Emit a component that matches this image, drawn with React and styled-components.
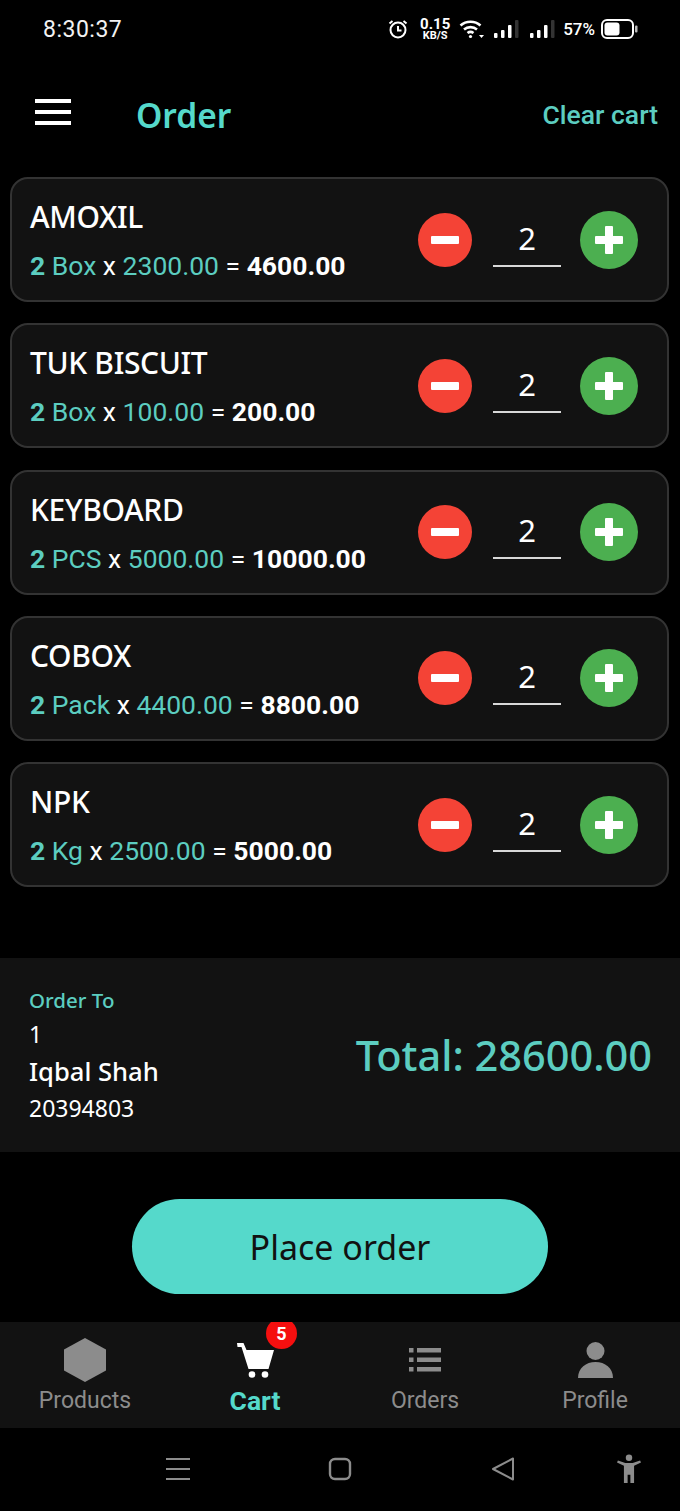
import React from 'react';
import styled, { createGlobalStyle } from 'styled-components';

const TEAL = '#55d9cb';
const SOFT_TEAL = '#5ccdc0';
const GREY = '#8c8c8c';

const GlobalStyle = createGlobalStyle`
  html, body {
    margin: 0;
    padding: 0;
    background: #000;
  }
`;

const Screen = styled.div`
  width: 680px;
  height: 1511px;
  background: #000;
  color: #fff;
  display: flex;
  flex-direction: column;
  overflow: hidden;
  font-family: "Noto Sans", sans-serif;
`;

const StatusBar = styled.div`
  height: 58px;
  flex: none;
  display: flex;
  align-items: center;
  justify-content: space-between;
  padding: 0 42px 0 43px;
  box-sizing: border-box;
`;

const Clock = styled.span`
  font-family: Roboto, sans-serif;
  font-size: 23px;
  letter-spacing: 0.5px;
  color: #f2f2f2;
`;

const StatusIcons = styled.div`
  display: flex;
  align-items: center;
  gap: 8px;
`;

const SignalGroup = styled.div`
  display: flex;
  align-items: center;
  gap: 11px;
`;

const Speed = styled.div`
  display: flex;
  flex-direction: column;
  align-items: center;
  font-family: Roboto, sans-serif;
  font-weight: 700;
  font-size: 15px;
  line-height: 13px;
  width: 30px;
  margin-left: 4px;
  small {
    font-size: 11px;
    line-height: 9px;
  }
`;

const Battery = styled.span`
  font-family: Roboto, sans-serif;
  font-weight: 500;
  font-size: 17px;
  margin-right: -2px;
`;

const Header = styled.div`
  height: 119px;
  flex: none;
  display: flex;
  align-items: flex-start;
  box-sizing: border-box;
  padding: 32px 22px 0 35px;
`;

const MenuButton = styled.div`
  width: 36px;
  height: 26px;
  margin-top: 9px;
  display: flex;
  flex-direction: column;
  justify-content: space-between;
  span {
    height: 4px;
    background: #fff;
  }
`;

const Title = styled.h1`
  margin: 0 0 0 65px;
  font-family: "Noto Sans", sans-serif;
  font-size: 33.500px;
  line-height: 50px;
  font-weight: 600;
  color: ${TEAL};
`;

const ClearCart = styled.span`
  margin-left: auto;
  font-family: Roboto, sans-serif;
  font-size: 26.500px;
  line-height: 50px;
  font-weight: 500;
  color: ${SOFT_TEAL};
`;

const CartList = styled.div`
  display: flex;
  flex-direction: column;
  gap: 21.300px;
  padding: 0 11px 0 10px;
  height: 781px;
  flex: none;
  box-sizing: border-box;
`;

const Card = styled.div`
  height: 125px;
  box-sizing: border-box;
  flex: none;
  background: #121212;
  border: 2px solid #333;
  border-radius: 18px;
  display: flex;
  align-items: center;
  padding: 0 29px 0 18px;
`;

const CardText = styled.div`
  flex: 1;
  min-width: 0;
`;

const ItemName = styled.div`
  font-size: 30px;
  line-height: 40px;
  letter-spacing: -0.350px;
  font-weight: 500;
  margin-top: 1px;
  margin-bottom: 12px;
`;

const ItemLine = styled.div`
  font-family: Roboto, sans-serif;
  font-size: 26.500px;
  line-height: 34px;
  white-space: pre;
  color: #fff;
`;

const Accent = styled.span`
  color: ${SOFT_TEAL};
  font-weight: ${(props) => (props.$bold ? 700 : 400)};
`;

const Strong = styled.span`
  font-weight: 700;
`;

const Stepper = styled.div`
  display: flex;
  align-items: center;
  flex: none;
`;

const RoundButton = styled.div`
  width: ${(props) => props.$size}px;
  height: ${(props) => props.$size}px;
  border-radius: 50%;
  background: ${(props) => props.$color};
  position: relative;
  flex: none;
  &::before,
  &::after {
    content: '';
    position: absolute;
    background: #fff;
    border-radius: 1px;
    left: 50%;
    top: 50%;
    width: 28px;
    height: 8px;
    transform: translate(-50%, -50%);
  }
  &::after {
    display: ${(props) => (props.$plus ? 'block' : 'none')};
    width: 8px;
    height: 28px;
  }
`;

const Qty = styled.div`
  width: 68px;
  height: 54px;
  margin: 0 19px 0 21px;
  box-sizing: border-box;
  border-bottom: 2px solid #d8d8d8;
  text-align: center;
  font-size: 31px;
  line-height: 50px;
`;

const Summary = styled.div`
  height: 194px;
  flex: none;
  background: #121212;
  box-sizing: border-box;
  padding: 27px 28px 0 29px;
  display: flex;
  justify-content: space-between;
  align-items: center;
`;

const Recipient = styled.div`
  display: flex;
  flex-direction: column;
  align-self: flex-start;
`;

const OrderTo = styled.div`
  font-size: 20.500px;
  line-height: 30px;
  font-weight: 500;
  color: ${SOFT_TEAL};
  margin-bottom: 3px;
`;

const RecipientLine = styled.div`
  font-size: ${(props) => (props.$large ? 25.600 : 23)}px;
  line-height: ${(props) => (props.$large ? 41 : 33)}px;
  font-weight: ${(props) => (props.$large ? 500 : 400)};
`;

const Total = styled.div`
  font-size: 41.500px;
  font-weight: 500;
  color: ${SOFT_TEAL};
  margin-bottom: 27px;
`;

const ButtonArea = styled.div`
  height: 170px;
  flex: none;
  box-sizing: border-box;
  padding-top: 47px;
  display: flex;
  justify-content: center;
  align-items: flex-start;
`;

const PlaceOrder = styled.button`
  width: 416px;
  height: 95px;
  border: none;
  border-radius: 48px;
  background: ${TEAL};
  color: #111;
  font-family: "Noto Sans", sans-serif;
  font-size: 34px;
`;

const TabBar = styled.div`
  height: 106px;
  flex: none;
  background: #121212;
  display: grid;
  grid-template-columns: repeat(4, 170px);
  overflow: hidden;
`;

const Tab = styled.div`
  display: flex;
  flex-direction: column;
  align-items: center;
  padding-top: 15px;
  position: relative;
  font-family: Roboto, sans-serif;
  font-size: ${(props) => (props.$active ? 26.500 : 23)}px;
  line-height: 28px;
  font-weight: ${(props) => (props.$active ? 700 : 400)};
  color: ${(props) => (props.$active ? TEAL : GREY)};
`;

const TabIcon = styled.div`
  height: 46px;
  display: flex;
  align-items: center;
  justify-content: center;
  margin-bottom: 4px;
`;

const Badge = styled.span`
  position: absolute;
  top: -4px;
  left: 96px;
  width: 31px;
  height: 31px;
  border-radius: 50%;
  background: #f50f0f;
  color: #fff;
  font-size: 18px;
  font-weight: 700;
  display: flex;
  align-items: center;
  justify-content: center;
`;

const NavBar = styled.div`
  flex: 1;
  display: grid;
  grid-template-columns: 192.500px 162.500px 162.500px 126px;
  padding-top: 26px;
  box-sizing: border-box;
  justify-items: end;
  align-items: start;
`;

const NavSlot = styled.div`
  width: 30px;
  height: 30px;
  display: flex;
  align-items: center;
  justify-content: center;
`;

const items = [
  { name: 'AMOXIL', unit: 'Box', price: '2300.00', total: '4600.00' },
  { name: 'TUK BISCUIT', unit: 'Box', price: '100.00', total: '200.00' },
  { name: 'KEYBOARD', unit: 'PCS', price: '5000.00', total: '10000.00' },
  { name: 'COBOX', unit: 'Pack', price: '4400.00', total: '8800.00' },
  { name: 'NPK', unit: 'Kg', price: '2500.00', total: '5000.00' },
];

function AlarmIcon() {
  return (
    <svg width="20" height="20" viewBox="0 0 20 20" fill="none" stroke="#fff" strokeWidth="2">
      <circle cx="10" cy="11" r="7.500" />
      <path d="M10 7v4.500h3.500M1.500 4.500 4.500 2M18.500 4.500 15.500 2" />
    </svg>
  );
}

function WifiIcon() {
  return (
    <svg width="28" height="22" viewBox="0 0 26 22" fill="none" stroke="#fff" strokeWidth="2.600">
      <path d="M1.500 7.500a15 15 0 0 1 20 0M5 11.500a10 10 0 0 1 13 0M8.500 15a5 5 0 0 1 6 0" />
      <circle cx="11.500" cy="18.500" r="1.600" fill="#fff" stroke="none" />
      <path d="M20 17l2.500 3 2.500-3z" fill="#fff" stroke="none" />
    </svg>
  );
}

function SignalIcon() {
  return (
    <svg width="25" height="20" viewBox="0 0 25 20">
      <rect x="0" y="14" width="3.500" height="5" rx="1" fill="#fff" />
      <rect x="7" y="11" width="3.500" height="8" rx="1" fill="#fff" />
      <rect x="14" y="6" width="3.500" height="13" rx="1" fill="#fff" />
      <rect x="21" y="1" width="3.500" height="18" rx="1" fill="#333" />
    </svg>
  );
}

function BatteryIcon() {
  return (
    <svg width="37" height="20" viewBox="0 0 37 20">
      <rect x="1" y="1" width="31" height="18" rx="5" fill="none" stroke="#fff" strokeWidth="2" />
      <rect x="3.500" y="3.500" width="15" height="13" rx="3" fill="#fff" />
      <rect x="34" y="6.500" width="2.500" height="7" rx="1" fill="#bbb" />
    </svg>
  );
}

function HexIcon() {
  return (
    <svg width="42" height="44" viewBox="0 0 42 44">
      <path d="M21 0 42 11.500v21L21 44 0 32.500v-21z" fill={GREY} />
    </svg>
  );
}

function CartIcon() {
  return (
    <svg width="38" height="36" viewBox="0 0 38 36" fill="#fff">
      <path d="M1 1h6.500l3 7H38l-5.500 19H12.500L5.500 5H1.500z" />
      <circle cx="16" cy="32.500" r="3.300" />
      <circle cx="29" cy="32.500" r="3.300" />
    </svg>
  );
}

function ListIcon() {
  return (
    <svg width="32" height="24" viewBox="0 0 32 24" fill={GREY}>
      <rect x="0" y="0" width="4.500" height="4.500" />
      <rect x="8" y="0" width="24" height="4.500" />
      <rect x="0" y="9.500" width="4.500" height="4.500" />
      <rect x="8" y="9.500" width="24" height="4.500" />
      <rect x="0" y="19" width="4.500" height="4.500" />
      <rect x="8" y="19" width="24" height="4.500" />
    </svg>
  );
}

function PersonIcon() {
  return (
    <svg width="35" height="36" viewBox="0 0 35 36" fill={GREY}>
      <circle cx="17.500" cy="9" r="9" />
      <path d="M0 36C0 26 8 20 17.500 20S35 26 35 36z" />
    </svg>
  );
}

function CartCard({ item }) {
  return (
    <Card>
      <CardText>
        <ItemName>{item.name}</ItemName>
        <ItemLine>
          <Accent $bold>2</Accent>
          <Accent> {item.unit}</Accent> x <Accent>{item.price}</Accent> = <Strong>{item.total}</Strong>
        </ItemLine>
      </CardText>
      <Stepper>
        <RoundButton $size={54} $color="#f44336" />
        <Qty>2</Qty>
        <RoundButton $size={58} $color="#4caf50" $plus />
      </Stepper>
    </Card>
  );
}

export default function App() {
  return (
    <Screen>
      <GlobalStyle />
      <StatusBar>
        <Clock>8:30:37</Clock>
        <StatusIcons>
          <AlarmIcon />
          <Speed>
            0.15
            <small>KB/S</small>
          </Speed>
          <WifiIcon />
          <SignalGroup>
            <SignalIcon />
            <SignalIcon />
          </SignalGroup>
          <Battery>57%</Battery>
          <BatteryIcon />
        </StatusIcons>
      </StatusBar>
      <Header>
        <MenuButton>
          <span />
          <span />
          <span />
        </MenuButton>
        <Title>Order</Title>
        <ClearCart>Clear cart</ClearCart>
      </Header>
      <CartList>
        {items.map((item) => (
          <CartCard key={item.name} item={item} />
        ))}
      </CartList>
      <Summary>
        <Recipient>
          <OrderTo>Order To</OrderTo>
          <RecipientLine>1</RecipientLine>
          <RecipientLine $large>Iqbal Shah</RecipientLine>
          <RecipientLine>20394803</RecipientLine>
        </Recipient>
        <Total>Total: 28600.00</Total>
      </Summary>
      <ButtonArea>
        <PlaceOrder>Place order</PlaceOrder>
      </ButtonArea>
      <TabBar>
        <Tab>
          <TabIcon><HexIcon /></TabIcon>
          Products
        </Tab>
        <Tab $active>
          <TabIcon><CartIcon /></TabIcon>
          <Badge>5</Badge>
          Cart
        </Tab>
        <Tab>
          <TabIcon><ListIcon /></TabIcon>
          Orders
        </Tab>
        <Tab>
          <TabIcon><PersonIcon /></TabIcon>
          Profile
        </Tab>
      </TabBar>
      <NavBar>
        <NavSlot>
          <svg width="24" height="22" viewBox="0 0 24 22" stroke={GREY} strokeWidth="2" fill="none">
            <path d="M0 1h24M0 11h24M0 21h24" />
          </svg>
        </NavSlot>
        <NavSlot>
          <svg width="24" height="24" viewBox="0 0 24 24" stroke={GREY} strokeWidth="2.400" fill="none">
            <rect x="2" y="2" width="20" height="20" rx="5" />
          </svg>
        </NavSlot>
        <NavSlot>
          <svg width="24" height="24" viewBox="0 0 24 24" stroke={GREY} strokeWidth="2" fill="none" strokeLinejoin="round">
            <path d="M22 1.500v21L2 12z" />
          </svg>
        </NavSlot>
        <NavSlot>
          <svg width="24" height="30" viewBox="0 0 26 32" fill={GREY} preserveAspectRatio="none">
            <circle cx="13" cy="4" r="3.500" />
            <path d="M0 9l1-2 8 2.500h8L25 7l1 2-7.500 3.500V31H14.500V22h-3v9H7.500V12.500z" />
          </svg>
        </NavSlot>
      </NavBar>
    </Screen>
  );
}
